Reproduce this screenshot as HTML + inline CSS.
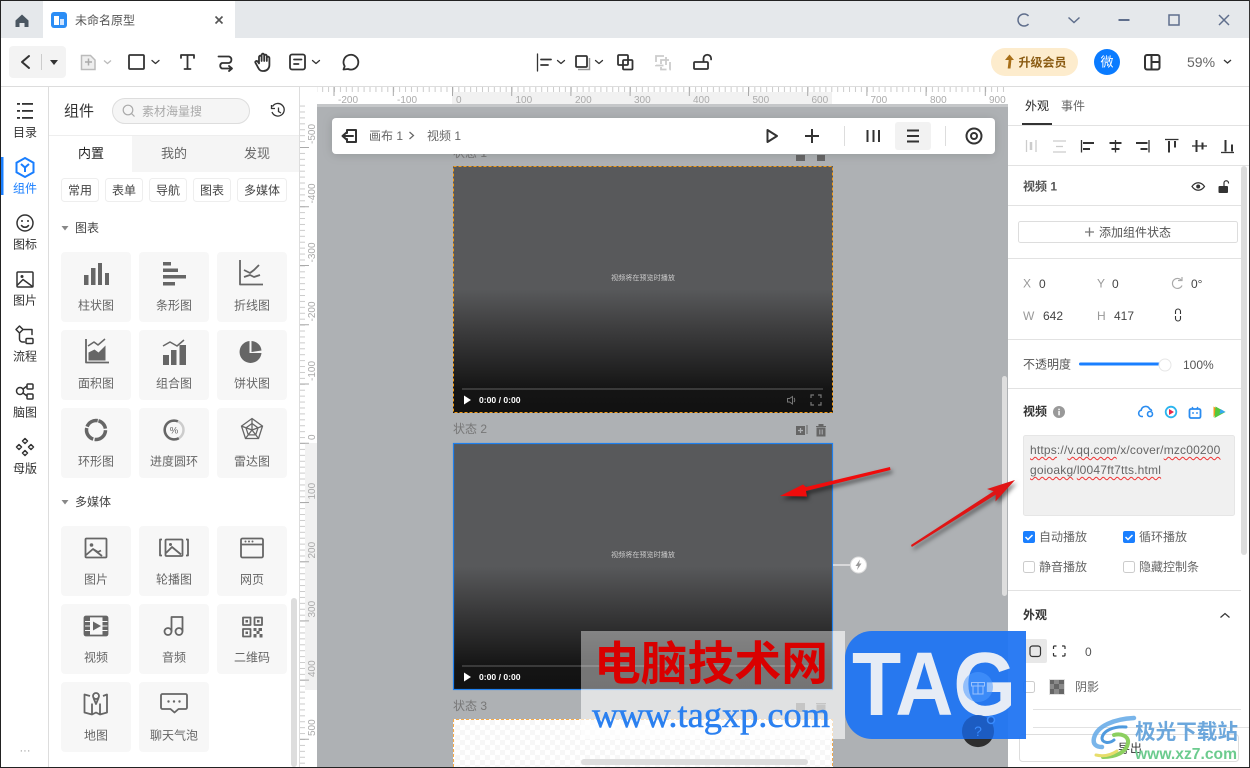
<!DOCTYPE html>
<html lang="zh"><head><meta charset="utf-8"><title>未命名原型</title>
<style>
html,body{margin:0;padding:0;background:#fff;width:1250px;height:768px;overflow:hidden}
svg{position:absolute;left:0;top:0;font-family:"Liberation Sans","Noto Sans CJK SC",sans-serif}
.m{text-anchor:middle}
.l text{font-size:12px;fill:#333}
.c text{font-size:12px;fill:#666;text-anchor:middle}
.r{font-size:10px;fill:#aaa}
.i{fill:none;stroke:#333;stroke-width:1.8;stroke-linecap:round;stroke-linejoin:round}
.g{fill:none;stroke:#666;stroke-width:1.8;stroke-linejoin:round}
.f{fill:#666}
#url{position:absolute;left:1030px;top:440px;width:204px;font:12px/20px "Liberation Sans",sans-serif;letter-spacing:.18px;color:#666;white-space:nowrap}
#url span{text-decoration:underline wavy #e33 1px;text-underline-offset:2px}
</style></head><body>
<svg width="1250" height="768" viewBox="0 0 1250 768" xmlns="http://www.w3.org/2000/svg">
<defs>
<linearGradient id="vg" x1="0" y1="0" x2="0" y2="1"><stop offset="0" stop-color="#58595b"/><stop offset=".5" stop-color="#58595b"/><stop offset=".66" stop-color="#3d3d3e"/><stop offset=".9" stop-color="#151515"/><stop offset="1" stop-color="#111"/></linearGradient>
<pattern id="mt" width="5.92" height="5" patternUnits="userSpaceOnUse" x="452.4"><rect width="1" height="5" fill="#ccc"/></pattern>
<pattern id="mv" width="5" height="5.92" patternUnits="userSpaceOnUse" y="443"><rect width="5" height="1" fill="#ccc"/></pattern>
<pattern id="ck" width="10" height="10" patternUnits="userSpaceOnUse"><rect width="10" height="10" fill="#fff"/><rect width="5" height="5" fill="#f7f7f7"/><rect x="5" y="5" width="5" height="5" fill="#f7f7f7"/></pattern>
<pattern id="ck2" width="10" height="10" patternUnits="userSpaceOnUse" x="1049" y="679"><rect width="10" height="10" fill="#8a8a8a"/><rect width="5" height="5" fill="#666"/><rect x="5" y="5" width="5" height="5" fill="#666"/></pattern>
<filter id="sh" x="-10%" y="-30%" width="120%" height="170%"><feDropShadow dx="0" dy="1" stdDeviation="5" flood-color="#000" flood-opacity=".14"/></filter>
</defs>

<!-- chrome -->
<rect width="1250" height="768" fill="#fff"/>
<rect x="0" y="0" width="1250" height="38" fill="#e5e8eb"/>
<rect x="43" y="1" width="192" height="37" fill="#fff"/>
<path d="M15.5 20.5 22 14.5l6.5 6V27H24.500v-4h-5v4H15.500z" fill="#4a5661"/>
<rect x="51" y="12" width="16" height="16" rx="3" fill="#2b8df5"/><rect x="54" y="16" width="5" height="9" fill="#fff"/><rect x="60" y="19" width="4" height="6" fill="#cfe4ff"/>
<text x="75" y="24.500" font-size="12" fill="#555">未命名原型</text>
<path d="M215.500 16.500l7 7m0-7l-7 7" stroke="#555" stroke-width="1.600" fill="none"/>
<g fill="none" stroke="#5f6e8c" stroke-width="1.500">
<path d="M1028.500 16A6 6 0 1 0 1028.500 24"/>
<path d="M1068.500 17.500l5.500 5 5.500-5"/>
<path d="M1118.500 20h11" stroke-width="2"/>
<rect x="1169" y="15" width="10" height="10"/>
<path d="M1219 15l10 10m0-10l-10 10"/>
</g>
<rect x="0" y="86" width="1250" height="1" fill="#ddd"/>

<!-- toolbar -->
<rect x="9" y="46" width="57" height="32" rx="4" fill="#f3f3f3"/>
<path class="i" d="M29 56l-7 6 7 6" style="stroke-width:2"/>
<path d="M41.500 54v16" stroke="#ccc"/>
<path d="M50 60h8l-4 5z" fill="#333"/>
<path d="M81.500 55.500h9l4.500 4.500v9.500h-13.500z" fill="#eee" stroke="#bbb" stroke-width="1.500"/><path d="M88.500 58.500v7m-3.500-3.500h7" stroke="#aaa" stroke-width="1.500"/>
<path d="M104 60.500l3.500 3 3.500-3" fill="none" stroke="#bbb" stroke-width="1.300"/>
<g class="i">
<rect x="129" y="55" width="15" height="14" rx="1"/>
<path d="M152 60.500l3.500 3 3.500-3" style="stroke-width:1.300"/>
<path d="M181 58v-3h13v3M187.500 55v14M184.500 69h6"/>
<path d="M218.500 56.500h10.500a3.400 3.400 0 0 1 0 6.500h-7a3 3 0 0 0 0 5.500h10M229 66l3 2.500-3 2.500"/>
<path d="M257.500 66.500l-2-3.700c-.8-1.500 1.200-2.600 2.200-1.200l1.300 1.800V57a1.300 1.300 0 0 1 2.600 0v4-6a1.300 1.300 0 0 1 2.600 0v6-5a1.300 1.300 0 0 1 2.600 0v5-3a1.300 1.300 0 0 1 2.600 0V65c0 3.500-2.500 6-6 6h-1c-2.500 0-3.400-1.700-4.900-4.500z"/>
<rect x="290" y="54.500" width="15" height="15" rx="2"/><path d="M294 59.500h7.500M294 64h4.500"/>
<path d="M312.500 60.500l3.500 3 3.500-3" style="stroke-width:1.300"/>
<path d="M343.500 69.500l1.200-3.300A7.400 7.400 0 1 1 348 69z"/>
<path d="M537.500 54v17" style="stroke-width:1.300"/><path d="M541 59.500h10M541 65h7"/>
<path d="M557.500 60.500l3.500 3 3.500-3" style="stroke-width:1.300"/>
<rect x="576" y="56" width="11" height="11" rx="1"/>
<path d="M595.500 60.500l3.500 3 3.500-3" style="stroke-width:1.300"/>
<rect x="618" y="55" width="10" height="10" rx="1"/><rect x="623" y="60" width="9.500" height="9.500" rx="1"/>
<path d="M695 62h12a1 1 0 0 1 1 1v5a1 1 0 0 1-1 1h-12a1 1 0 0 1-1-1v-5a1 1 0 0 1 1-1zM703.500 61.500v-3a3.800 3.800 0 0 1 7.600 0v1"/>
</g>
<path d="M589.500 58v11.500H578" fill="none" stroke="#999" stroke-width="1.500"/>
<g fill="none" stroke="#ccc" stroke-width="1.800"><rect x="656" y="56" width="10" height="9.500" stroke-dasharray="8 3"/><rect x="661" y="60" width="9" height="9.500" stroke-dasharray="8 3"/></g>
<rect x="991" y="48" width="87" height="28" rx="14" fill="#fdeccd"/>
<path d="M1009.500 54.500l4.500 5.500h-2.600l-.9 8.500h-2.800l1-8.500h-3.700z" fill="#a86f18"/>
<text x="1018.500" y="66.300" font-size="12" font-weight="700" fill="#8a5b12">升级会员</text>
<circle cx="1107" cy="62" r="13" fill="#0a7bff"/><text x="1107" y="66.700" class="m" font-size="13" fill="#fff">微</text>
<g class="i" style="stroke-width:2"><rect x="1145" y="55" width="14.500" height="14.500" rx="2"/><path d="M1151.500 55v14.500M1151.500 62h8"/></g>
<text x="1187" y="67" font-size="14" fill="#666">59%</text>
<path d="M1224 60l3.500 3 3.500-3" fill="none" stroke="#333" stroke-width="1.300"/>

<!-- left nav -->
<rect x="48" y="87" width="1" height="681" fill="#ddd"/>
<g fill="#333"><rect x="17" y="103" width="3" height="1.800"/><rect x="22" y="103" width="11" height="1.800"/><rect x="17" y="110" width="3" height="1.800"/><rect x="22" y="110" width="11" height="1.800"/><rect x="17" y="117" width="3" height="1.800"/><rect x="22" y="117" width="11" height="1.800"/></g>
<rect x="1" y="157" width="2.500" height="38" fill="#1a7fff"/>
<path d="M25 158l8.500 4.700v9.600L25 177l-8.500-4.700v-9.600z" fill="none" stroke="#1a7fff" stroke-width="2"/>
<path d="M21 164l4 3.500 4-3.500M25 167.500v4.500" fill="none" stroke="#1a7fff" stroke-width="2"/>
<g class="i" style="stroke-width:1.500">
<circle cx="25" cy="223" r="8"/><path d="M21.500 225.500c1.800 2.400 5.200 2.400 7 0"/>
<rect x="17" y="272" width="16" height="15" rx="1"/><path d="M17.500 285l5.500-5.500 9.500 7"/>
<path d="M19.500 326l3.500 3.500-3.500 3.500-3.500-3.500zM23 329.500h9v5M19.500 333v6a3 3 0 0 0 3 3h2"/><rect x="26" y="338.500" width="7" height="5" rx="1"/>
<circle cx="20" cy="391" r="3.500"/><rect x="27" y="384" width="6" height="5" rx="1"/><rect x="27" y="394" width="6" height="5" rx="1"/><path d="M23 389l4-3M23 393l4 3"/>
<path d="M25 438.500l2.500 2.500-2.500 2.500-2.500-2.500zM25 450.500l2.500 2.500-2.500 2.500-2.500-2.500zM19 444.500l2.500 2.500-2.500 2.500-2.500-2.500zM31 444.500l2.500 2.500-2.500 2.500-2.500-2.500z"/>
</g>
<circle cx="22" cy="276.500" r="1.500" fill="#333"/>
<circle cx="22" cy="221" r="1" fill="#333"/><circle cx="28" cy="221" r="1" fill="#333"/>
<g class="l">
<text x="25" y="136.500" text-anchor="middle">目录</text>
<text x="25" y="192.500" text-anchor="middle" style="fill:#1a7fff">组件</text>
<text x="25" y="248.500" text-anchor="middle">图标</text>
<text x="25" y="304.500" text-anchor="middle">图片</text>
<text x="25" y="360.500" text-anchor="middle">流程</text>
<text x="25" y="416.500" text-anchor="middle">脑图</text>
<text x="25" y="472.500" text-anchor="middle">母版</text>
</g>
<text x="25" y="754" text-anchor="middle" font-size="11" fill="#999">···</text>

<!-- component panel -->
<text x="64" y="116" font-size="15" fill="#333">组件</text>
<rect x="112.500" y="98.500" width="137" height="25" rx="12.500" fill="#f5f5f5" stroke="#ddd"/>
<circle cx="128" cy="110" r="4.800" fill="none" stroke="#aaa" stroke-width="1.200"/><path d="M131.500 113.500l3 3" stroke="#aaa" stroke-width="1.200"/>
<text x="142" y="115.300" font-size="12" fill="#aaa">素材海量搜</text>
<path d="M272.500 106.500a6.300 6.300 0 1 1-.5 5.500M271.500 105v3.500h3.500M278.500 107.500v4l2.500 1.500" fill="none" stroke="#333" stroke-width="1.300"/>
<rect x="49" y="135" width="250" height="1" fill="#eee"/>
<rect x="132" y="136" width="167" height="36" fill="#f5f5f5"/>
<text x="91" y="158" text-anchor="middle" font-size="13" fill="#222">内置</text>
<text x="174" y="158" text-anchor="middle" font-size="13" fill="#666">我的</text>
<text x="257" y="158" text-anchor="middle" font-size="13" fill="#666">发现</text>
<g fill="#fff" stroke="#eee"><rect x="61.500" y="178.500" width="37" height="23" rx="3"/><rect x="105.500" y="178.500" width="37" height="23" rx="3"/><rect x="149.500" y="178.500" width="37" height="23" rx="3"/><rect x="193.500" y="178.500" width="37" height="23" rx="3"/><rect x="237.500" y="178.500" width="49" height="23" rx="3"/></g>
<g font-size="12" fill="#444" text-anchor="middle"><text x="80" y="194.300">常用</text><text x="124" y="194.300">表单</text><text x="168" y="194.300">导航</text><text x="212" y="194.300">图表</text><text x="262" y="194.300">多媒体</text></g>
<path d="M61.500 226h7l-3.500 4.500zM61.500 500h7l-3.500 4.500z" fill="#888"/>
<text x="75" y="232" font-size="12" fill="#444">图表</text>
<text x="75" y="506" font-size="12" fill="#444">多媒体</text>
<g fill="#f7f7f7">
<rect x="61" y="252" width="70" height="70" rx="4"/><rect x="139" y="252" width="70" height="70" rx="4"/><rect x="217" y="252" width="70" height="70" rx="4"/>
<rect x="61" y="330" width="70" height="70" rx="4"/><rect x="139" y="330" width="70" height="70" rx="4"/><rect x="217" y="330" width="70" height="70" rx="4"/>
<rect x="61" y="408" width="70" height="70" rx="4"/><rect x="139" y="408" width="70" height="70" rx="4"/><rect x="217" y="408" width="70" height="70" rx="4"/>
<rect x="61" y="526" width="70" height="70" rx="4"/><rect x="139" y="526" width="70" height="70" rx="4"/><rect x="217" y="526" width="70" height="70" rx="4"/>
<rect x="61" y="604" width="70" height="70" rx="4"/><rect x="139" y="604" width="70" height="70" rx="4"/><rect x="217" y="604" width="70" height="70" rx="4"/>
<rect x="61" y="682" width="70" height="70" rx="4"/><rect x="139" y="682" width="70" height="70" rx="4"/>
</g>
<g class="c">
<text x="96" y="309.500">柱状图</text><text x="174" y="309.500">条形图</text><text x="252" y="309.500">折线图</text>
<text x="96" y="387.500">面积图</text><text x="174" y="387.500">组合图</text><text x="252" y="387.500">饼状图</text>
<text x="96" y="465.500">环形图</text><text x="174" y="465.500">进度圆环</text><text x="252" y="465.500">雷达图</text>
<text x="96" y="583.500">图片</text><text x="174" y="583.500">轮播图</text><text x="252" y="583.500">网页</text>
<text x="96" y="661.500">视频</text><text x="174" y="661.500">音频</text><text x="252" y="661.500">二维码</text>
<text x="96" y="739.500">地图</text><text x="174" y="739.500">聊天气泡</text>
</g>
<!-- chart icons -->
<g class="f"><rect x="84" y="275" width="4.500" height="10"/><rect x="91" y="268" width="4.500" height="17"/><rect x="98" y="263" width="4" height="22"/><rect x="105" y="273" width="4" height="12"/></g>
<g class="f"><rect x="163" y="262" width="8" height="3.500"/><rect x="163" y="268.500" width="15" height="3.500"/><rect x="163" y="275" width="23" height="3.500"/><rect x="163" y="282" width="12" height="3.500"/></g>
<path class="g" d="M240 260v24.500h23M244 270l6 3 4-3 5-5M244 277l6-2 4 2 6-2"/>
<path class="g" d="M86 339v23.500h23"/><path class="f" d="M88.500 360.500v-8l6-3 4 3 7-7v15z"/><path class="g" d="M88 346l6-4 4 3 7-6" style="stroke-width:1.500"/>
<g class="f"><rect x="163" y="355" width="6" height="10"/><rect x="171" y="350" width="5.500" height="15"/><rect x="179.500" y="345" width="6.500" height="20"/></g><path class="g" d="M163 346l7-4 7 4 7-6" style="stroke-width:1.500"/>
<path class="f" d="M249.500 341a11 11 0 1 0 12 12h-12zM251.500 341a10.500 10.500 0 0 1 10 9.500l-10 1.500z"/>
<circle cx="96" cy="430" r="9.500" fill="none" stroke="#666" stroke-width="3.500" stroke-dasharray="11 1.500 16 1.500 14 1.500 13 1.500" transform="rotate(-75 96 430)"/>
<circle cx="174" cy="430" r="9.500" fill="none" stroke="#ccc" stroke-width="2.500"/><path d="M174 420.500a9.500 9.500 0 0 1 4 18 9.500 9.500 0 0 1-13.500-8.500 9.500 9.500 0 0 1 9.500-9.500" fill="none" stroke="#666" stroke-width="2.500" stroke-dasharray="38 60" transform="rotate(150 174 430)"/><text x="174" y="433.500" text-anchor="middle" font-size="9.500" fill="#666">%</text>
<g fill="none" stroke="#666" stroke-width="1.300"><path d="M252 418.500l10.500 7.600-4 12.400h-13l-4-12.400z"/><path d="M252 423.500l6 4.400-2.300 7H248.300l-2.300-7z"/><path d="M252 418.500v11.500l10.500-3.900M252 430l6.500 8.500M252 430l-6.500 8.500M252 430l-10.500-3.900"/></g>
<!-- media icons -->
<g class="g"><rect x="85.500" y="538.500" width="21" height="19" rx="1"/><path d="M86 555l7-6 5 3 3-1.500M93 549l9 7"/></g><circle cx="91.500" cy="545" r="1.800" class="f"/>
<g class="g"><rect x="165.500" y="539.500" width="17" height="16.500" rx="1"/><path d="M166 553l6-6 9 7.500M162 539.500h-2v16h2M186 539.500h2v16h-2"/></g><circle cx="170.500" cy="544.500" r="1.500" class="f"/>
<g class="g"><rect x="241" y="538.500" width="22" height="19" rx="1.500"/><path d="M241 544.500h22"/></g><circle cx="245.500" cy="541.500" r="1" class="f"/><circle cx="249" cy="541.500" r="1" class="f"/><circle cx="252.500" cy="541.500" r="1" class="f"/>
<rect x="84.500" y="616.500" width="23" height="19" rx="1.500" fill="none" stroke="#666" stroke-width="1.800"/><path class="f" d="M85 617h5v18h-5zM102.500 617h5v18h-5z"/><path d="M85 621.500h5M85 626h5M85 630.500h5M102.500 621.500h5M102.500 626h5M102.500 630.500h5" stroke="#f7f7f7"/><path d="M93 621.500l8 4.500-8 4.500z" class="f"/>
<g class="g"><circle cx="168" cy="631.500" r="3.500"/><circle cx="179" cy="631.500" r="3.500"/><path d="M171.500 631.500v-14.500h11v14.500"/></g>
<g class="g"><rect x="243" y="617.500" width="7.500" height="7.500"/><rect x="254.500" y="617.500" width="7.500" height="7.500"/><rect x="243" y="629" width="7.500" height="7.500"/></g>
<g class="f"><rect x="245.500" y="620" width="2.500" height="2.500"/><rect x="257" y="620" width="2.500" height="2.500"/><rect x="245.500" y="631.500" width="2.500" height="2.500"/><path d="M253.500 628h3v3h-3zM258.500 628h3.500v3h-3.500zM256.500 631h3v3h-3zM253.500 634h3v3.500h-3zM259.500 634h3v3.500h-3z"/></g>
<g class="g"><path d="M90 696l-5.500-1.500v18l7.500 2 4-2 4 2 7-2v-18l-4 1.500M92 703.500v11M100 703.500v11"/><circle cx="96" cy="696" r="3"/><path d="M93.500 698l2.500 6 2.500-6"/></g>
<path class="g" d="M161 695.500a1.500 1.500 0 0 1 1.500-1.500h23a1.500 1.500 0 0 1 1.500 1.500v12a1.500 1.500 0 0 1-1.500 1.500h-7l-4 3.500-4-3.500h-8a1.500 1.500 0 0 1-1.500-1.500z"/><circle cx="168.500" cy="701.500" r="1.200" class="f"/><circle cx="174" cy="701.500" r="1.200" class="f"/><circle cx="179.500" cy="701.500" r="1.200" class="f"/>
<rect x="291" y="598" width="6" height="169" rx="3" fill="#ddd"/>

<!-- rulers -->
<rect x="299" y="87" width="1" height="681" fill="#ddd"/>
<rect x="300" y="87" width="708" height="17" fill="#fff"/>
<rect x="452" y="92" width="380" height="12" fill="#f1f1f1"/>
<rect x="317" y="87" width="691" height="5" fill="url(#mt)"/>
<path d="M334 87v9M393.300 87v9M452.500 87v9M511.700 87v9M570.900 87v9M630.100 87v9M689.300 87v9M748.500 87v9M807.700 87v9M866.900 87v9M926.100 87v9M985.300 87v9" stroke="#aaa" stroke-width="1"/>
<g class="r"><text x="338" y="103">-200</text><text x="397" y="103">-100</text><text x="456" y="103">0</text><text x="515.500" y="103">100</text><text x="575" y="103">200</text><text x="634" y="103">300</text><text x="693" y="103">400</text><text x="752.500" y="103">500</text><text x="811.500" y="103">600</text><text x="870.500" y="103">700</text><text x="930" y="103">800</text><text x="989" y="103">900</text></g>
<rect x="300" y="104" width="17" height="664" fill="#fff"/>
<rect x="305" y="443" width="12" height="247" fill="#f1f1f1"/>
<rect x="300" y="104" width="5" height="664" fill="url(#mv)"/>
<path d="M300 147.500h9M300 206.700h9M300 265.500h9M300 324.700h9M300 384h9M300 443.300h9M300 502.500h9M300 561.700h9M300 620.900h9M300 680.100h9M300 739.300h9" stroke="#aaa"/>
<g class="r">
<text transform="translate(315,144) rotate(-90)">-500</text><text transform="translate(315,203.500) rotate(-90)">-400</text><text transform="translate(315,262.500) rotate(-90)">-300</text><text transform="translate(315,321.500) rotate(-90)">-200</text><text transform="translate(315,381) rotate(-90)">-100</text><text transform="translate(315,440) rotate(-90)">0</text><text transform="translate(315,499.500) rotate(-90)">100</text><text transform="translate(315,558.500) rotate(-90)">200</text><text transform="translate(315,617.500) rotate(-90)">300</text><text transform="translate(315,677) rotate(-90)">400</text><text transform="translate(315,736) rotate(-90)">500</text>
</g>

<!-- canvas -->
<rect x="317" y="104" width="691" height="664" fill="#aeb1b4"/>
<rect x="317" y="104" width="691" height="3" fill="#c5c7c9"/>
<text x="453" y="157" font-size="12" fill="#777">状态 1</text>
<path d="M796 155h9v6h-9zM817 155h8v6h-8z" fill="#666"/>
<!-- frame 1 -->
<rect x="453" y="166" width="380" height="247" fill="url(#vg)"/>
<rect x="453.500" y="166.500" width="379" height="246" fill="none" stroke="#f39a14" stroke-dasharray="3 2"/>
<text x="643" y="280" text-anchor="middle" font-size="7.100" fill="#ccc">视频将在预览时播放</text>
<rect x="462" y="388" width="361" height="2" fill="#3a3a3a"/>
<path d="M464 395.500l7 4.500-7 4.500z" fill="#fff"/>
<text x="479" y="403" font-size="8.600" font-weight="700" fill="#fff">0:00 / 0:00</text>
<path d="M787.500 398.500h2l3-2v7.500l-3-2h-2zM794 398c1 1 1 3 0 4" fill="none" stroke="#777"/>
<path d="M811 398v-3h3M818 395h3v3M821 402v3h-3M814 405h-3v-3" fill="none" stroke="#777" stroke-width="1.200"/>
<!-- frame 2 -->
<text x="453" y="433" font-size="12" fill="#777">状态 2</text>
<g fill="#666"><path d="M796 426h9v9h-9z"/><path d="M807 425v9" stroke="#666" fill="none"/></g><path d="M800.500 428v5M798 430.500h5" stroke="#aeb1b4" stroke-width="1.200"/>
<path d="M816 426.500h10M819 426v-1.500h4v1.500M817 428h8v8h-8z" fill="#666" stroke="#666"/><path d="M819.800 429.500v5M822.200 429.500v5" stroke="#aeb1b4"/>
<rect x="453" y="443" width="380" height="247" fill="url(#vg)"/>
<rect x="453.500" y="443.500" width="379" height="246" fill="none" stroke="#1f80ee" stroke-width="1.200"/>
<text x="643" y="557" text-anchor="middle" font-size="7.100" fill="#ccc">视频将在预览时播放</text>
<rect x="462" y="665" width="361" height="2" fill="#3a3a3a"/>
<path d="M464 672.500l7 4.500-7 4.500z" fill="#fff"/>
<text x="479" y="680" font-size="8.600" font-weight="700" fill="#fff">0:00 / 0:00</text>
<path d="M833 565h20" stroke="#e6e6e6" stroke-width="1.500"/>
<circle cx="858.500" cy="565" r="8" fill="#fff" stroke="#ddd"/><path d="M860 559.500l-4.500 6.500h2.500l-1 4 4.500-6.500H859z" fill="#9a9a9a"/>
<!-- frame 3 -->
<text x="453" y="710" font-size="12" fill="#777">状态 3</text>
<g fill="#666"><path d="M796 703h9v9h-9z"/></g>
<path d="M816 703.500h10M817 705h8v8h-8z" fill="#666" stroke="#666"/>
<rect x="453" y="719" width="380" height="49" fill="url(#ck)"/>
<path d="M453.500 767V719.500H832.500V767" fill="none" stroke="#f5aa4a" stroke-dasharray="3 2"/>
<rect x="581" y="759" width="227" height="6" rx="3" fill="#ddd"/>
<rect x="1002" y="376" width="5" height="220" rx="2.500" fill="#dedede"/>

<!-- floating bar -->
<rect x="332" y="118" width="663" height="36" rx="4" fill="#fff" filter="url(#sh)"/>
<g class="i" style="stroke-width:2"><path d="M347 133v-3h9v12h-9v-3M353 136h-10M346.500 132.500l-4 3.500 4 3.500"/></g>
<text x="369" y="140" font-size="12" fill="#666">画布 1</text>
<path d="M409.500 132l4 3.500-4 3.500" fill="none" stroke="#666" stroke-width="1.200"/>
<text x="427" y="140" font-size="12" fill="#666">视频 1</text>
<path d="M767.500 130l9.500 6-9.500 6z" fill="none" stroke="#333" stroke-width="2" stroke-linejoin="round"/>
<path d="M805 136h14M812 129v14" stroke="#333" stroke-width="2"/>
<path d="M844.500 126v20M945.500 126v20" stroke="#ddd"/>
<path d="M867.500 130v12M873.500 130v12M879 130v12" stroke="#333" stroke-width="2"/>
<rect x="895" y="122" width="36" height="28" rx="3" fill="#f2f2f2"/>
<path d="M907 130.500h12M907 136h12M907 141.500h12" stroke="#333" stroke-width="2"/>
<circle cx="974" cy="136" r="7.500" fill="none" stroke="#333" stroke-width="2"/><circle cx="974" cy="136" r="3" fill="none" stroke="#333" stroke-width="2"/>

<!-- right panel -->
<rect x="1008" y="87" width="242" height="681" fill="#fff"/>
<text x="1025" y="110" font-size="12" fill="#222">外观</text>
<text x="1061" y="110" font-size="12" fill="#666">事件</text>
<rect x="1022" y="123" width="30" height="2" fill="#333"/>
<path d="M1008 125.500h242M1008 165.500h242M1008 205.500h233M1008 258.500h233M1008 339.500h233M1008 388.500h233M1008 590.500h233M1033 709.500h208M1033 727.500h217" stroke="#e2e2e2"/>
<g fill="none" stroke="#ccc" stroke-width="1.300"><path d="M1026.500 140v12M1036 140v12"/><path d="M1031 142v8" stroke-width="2.500"/><path d="M1053 141h13M1053 152h13M1056 146.500h7"/></g>
<g fill="none" stroke="#333" stroke-width="1.300">
<path d="M1081.500 140v12.500"/><path d="M1083 143h11M1083 149h7" stroke-width="2"/>
<path d="M1115.500 140v12.500"/><path d="M1109.500 143h12M1111.500 149h8" stroke-width="2"/>
<path d="M1149 140v12.500"/><path d="M1136 143h11.500M1140.500 149h7" stroke-width="2"/>
<path d="M1165 139.500h13.500"/><path d="M1169 141v11.500M1175 141v6.500" stroke-width="2"/>
<path d="M1192 146h15"/><path d="M1196.500 140v12M1202.500 142.500v7" stroke-width="2"/>
<path d="M1221 152.500h13"/><path d="M1225.500 140v11.500M1232 144.500v7" stroke-width="2"/>
</g>
<rect x="1241" y="166" width="6" height="389" rx="3" fill="#dcdcdc"/>
<text x="1023" y="190.300" font-size="12" font-weight="700" fill="#555">视频 1</text>
<path d="M1192 186.500c3.500-5 9-5 12.500 0-3.500 5-9 5-12.500 0z" fill="none" stroke="#333" stroke-width="1.200"/><circle cx="1198.200" cy="186.500" r="2" fill="#333"/>
<rect x="1218.500" y="186" width="9.500" height="7" rx="1" fill="#333"/><path d="M1224 186v-3a2.200 2.200 0 0 1 4.500 0v.5" fill="none" stroke="#333" stroke-width="1.200"/>
<rect x="1018.500" y="221.500" width="219" height="21" rx="2" fill="#fff" stroke="#ddd"/>
<path d="M1085 232h9M1089.500 227.500v9" stroke="#777" stroke-width="1.300"/>
<text x="1099" y="236.300" font-size="12" fill="#555">添加组件状态</text>
<g font-size="12">
<text x="1023" y="287.500" fill="#999">X</text><text x="1039" y="288" fill="#444">0</text>
<text x="1097" y="287.500" fill="#999">Y</text><text x="1112" y="288" fill="#444">0</text>
<text x="1191" y="288" fill="#444">0°</text>
<text x="1023" y="320" fill="#999">W</text><text x="1043" y="320" fill="#444">642</text>
<text x="1097" y="320" fill="#999">H</text><text x="1114" y="320" fill="#444">417</text>
<text x="1023" y="368.500" fill="#555">不透明度</text>
<text x="1183" y="369" fill="#555">100%</text>
<text x="1023" y="415.500" font-weight="700" fill="#333">视频</text>
<text x="1039" y="541" fill="#666">自动播放</text><text x="1139" y="541" fill="#666">循环播放</text>
<text x="1039" y="571" fill="#666">静音播放</text><text x="1139" y="571" fill="#666">隐藏控制条</text>
<text x="1023" y="619" font-weight="700" fill="#333">外观</text>
<text x="1085" y="656" fill="#555">0</text>
<text x="1075" y="691" fill="#666">阴影</text>
</g>
<path d="M1181.500 280.500a5 5 0 1 0 .5 5M1178 280.500h4v-3.500" fill="none" stroke="#aaa" stroke-width="1.200"/>
<path d="M1175.500 314v-2.500a2.500 2.500 0 0 1 5 0V314M1175.500 316v2.500a2.500 2.500 0 0 0 5 0V316" fill="none" stroke="#333" stroke-width="1.100"/>
<rect x="1079" y="362.500" width="81" height="3" rx="1.500" fill="#1a7fff"/>
<circle cx="1165" cy="365" r="6" fill="#fff" stroke="#e6e6e6"/>
<circle cx="1059" cy="412" r="6" fill="#999"/><rect x="1058.300" y="411" width="1.500" height="4.300" fill="#fff"/><rect x="1058.300" y="408.700" width="1.500" height="1.500" fill="#fff"/>
<path d="M1143 416.500h-1.500a3.200 3.200 0 0 1-.3-6.300 4.500 4.500 0 0 1 8.500-1.200 3 3 0 0 1 2 2" fill="none" stroke="#2a8cf0" stroke-width="1.600"/><circle cx="1150" cy="414" r="2.500" fill="none" stroke="#2a8cf0" stroke-width="1.600"/>
<circle cx="1171" cy="412" r="5.300" fill="none" stroke="#2ab4ee" stroke-width="1.800"/><path d="M1169 409l5 3-5 3z" fill="#e8294a"/>
<rect x="1189.500" y="409" width="11" height="9" rx="1.500" fill="none" stroke="#2a8cf0" stroke-width="1.800"/><path d="M1192 407l1.500 2M1198 407l-1.500 2" stroke="#2a8cf0" stroke-width="1.300"/><path d="M1193 412v2M1197 412v2" stroke="#2a8cf0" stroke-width="1.300"/>
<path d="M1213.500 406.500l5 3-5 8z" fill="#f59a1c"/><path d="M1214.500 418l1-11.500 10 5.500z" fill="#54c83c"/><path d="M1225.500 412l-5-3-1 5z" fill="#35a8f0"/>
<rect x="1023.500" y="435.500" width="211" height="80" rx="2" fill="#f0f0f0" stroke="#e6e6e6"/>
<g>
<rect x="1023" y="531" width="12" height="12" rx="2" fill="#1a7fff"/><path d="M1025.500 537l2.500 2.500 4.500-4.500" fill="none" stroke="#fff" stroke-width="1.500"/>
<rect x="1123" y="531" width="12" height="12" rx="2" fill="#1a7fff"/><path d="M1125.500 537l2.500 2.500 4.500-4.500" fill="none" stroke="#fff" stroke-width="1.500"/>
<rect x="1023.500" y="561.500" width="11" height="11" rx="2" fill="#fff" stroke="#ccc"/>
<rect x="1123.500" y="561.500" width="11" height="11" rx="2" fill="#fff" stroke="#ccc"/>
<rect x="1023.500" y="681.500" width="11" height="11" rx="2" fill="#fff" stroke="#ccc"/>
</g>
<path d="M1220.500 617.500l4.500-4 4.500 4" fill="none" stroke="#333" stroke-width="1.200"/>
<rect x="1024" y="639" width="23" height="24" rx="2" fill="#e8e8e8"/>
<rect x="1030" y="646" width="10.500" height="10.500" rx="2.500" fill="none" stroke="#333" stroke-width="1.200"/>
<path d="M1053.500 649v-2a1 1 0 0 1 1-1h2M1062 646h2a1 1 0 0 1 1 1v2M1065 653v2a1 1 0 0 1-1 1h-2M1056.500 656h-2a1 1 0 0 1-1-1v-2" fill="none" stroke="#333" stroke-width="1.200"/>
<rect x="1049.500" y="679.500" width="15" height="15" fill="url(#ck2)" stroke="#e2e2e2"/>
<rect x="1019.500" y="734.500" width="219" height="27" rx="3" fill="#fff" stroke="#ddd"/>
<text x="1130" y="752.500" text-anchor="middle" font-size="12" fill="#333">导出</text>

<!-- window edge -->
<rect x="0" y="0" width="1250" height="1" fill="#222"/><rect x="0" y="0" width="1" height="768" fill="#222"/><rect x="1249" y="0" width="1" height="768" fill="#333"/><rect x="0" y="767" width="1250" height="1" fill="#222"/>
</svg>

<div id="url"><span>https</span>://<span>v.qq.com</span>/x/cover/<span>mzc00200</span><br><span>goioakg</span>/<span>l0047ft7tts.html</span></div>

<svg width="1250" height="768" viewBox="0 0 1250 768" xmlns="http://www.w3.org/2000/svg">
<!-- arrows -->
<polygon points="890,467 806,487 803,484.500 780,496 807,496.500 806,491 890.500,470" fill="#f00c0c" style="filter:drop-shadow(2px 3px 2px rgba(0,0,0,.55))"/>
<polygon points="911,545 993.600,491.200 987,489 1015,480 995.500,501.500 995.800,494.600 911.800,547" fill="#e01515" style="filter:drop-shadow(2px 3px 2px rgba(0,0,0,.5))"/>
<!-- watermark -->
<rect x="581" y="631" width="252" height="58" fill="#fff" fill-opacity=".42"/>
<rect x="833" y="631" width="12" height="58" fill="#fff" fill-opacity=".62"/>
<rect x="581" y="689" width="264" height="50" fill="#fff" fill-opacity=".62"/>
<text x="594" y="680" font-family="Noto Sans CJK SC,sans-serif" font-weight="700" font-size="46.500" fill="#d90000" textLength="234" lengthAdjust="spacingAndGlyphs">电脑技术网</text>
<text x="592" y="727" font-family="Liberation Serif,serif" font-size="36" fill="#2b80f0" stroke="#2b80f0" stroke-width=".5" textLength="238" lengthAdjust="spacingAndGlyphs">www.tagxp.com</text>
<path d="M872 631H1026V739H872a27 27 0 0 1-27-27V658a27 27 0 0 1 27-27z" fill="#1f74f2" fill-opacity=".94"/>
<text x="852" y="715" font-size="90" font-weight="700" fill="#f0f2f5" fill-opacity=".95" textLength="164" lengthAdjust="spacingAndGlyphs">TAG</text>
<!-- gift + help bubbles seen through the watermark -->
<circle cx="978" cy="687" r="15" fill="#4f9bff" fill-opacity=".55"/>
<path d="M971.500 682.500h13v3.500h-13zM973 686h10v8h-10zM978 682.500v11.500" stroke="#d8e8ff" stroke-opacity=".6" fill="none"/>
<path d="M962 731a16 16 0 0 1 32 0z" fill="#1c5cc2"/>
<path d="M962 731a16 16 0 0 0 2 8h28a16 16 0 0 0 2-8z" fill="#1c5cc2"/>
<path d="M964.100 739a16 16 0 0 0 27.800 0z" fill="#2e2e2e"/>
<text x="978" y="736" text-anchor="middle" font-size="14" fill="#3a8cff">?</text>
<circle cx="991" cy="720" r="3.500" fill="#1c5cc2" stroke="#3a8cff" stroke-width="1.500"/>
<!-- xz7 logo -->
<g fill="none" stroke-linecap="round">
<path d="M1134 718c-20 1-37 8-40 20-1.500 6 2 9 8 9" stroke="#62a8e6" stroke-width="4.500" opacity=".85"/>
<path d="M1126 727c-13-1-23 4-24 11 0 5 7 6 12 2" stroke="#4f9ade" stroke-width="3"/>
<path d="M1103 757c12 0 23-4 25-14 1-7-7-10-14-8" stroke="#8ccf5f" stroke-width="4"/>
<path d="M1096 755c8 2 15 0 21-4" stroke="#e7dd6b" stroke-width="3"/>
</g>
<text x="1135" y="739" font-size="21" font-weight="700" fill="#5f9fd9" fill-opacity=".92" textLength="103" lengthAdjust="spacingAndGlyphs">极光下载站</text>
<text x="1135" y="759" font-size="16" font-weight="700" fill="#6ccb8e" textLength="102" lengthAdjust="spacingAndGlyphs">www.xz7.com</text>
</svg>
</body></html>
